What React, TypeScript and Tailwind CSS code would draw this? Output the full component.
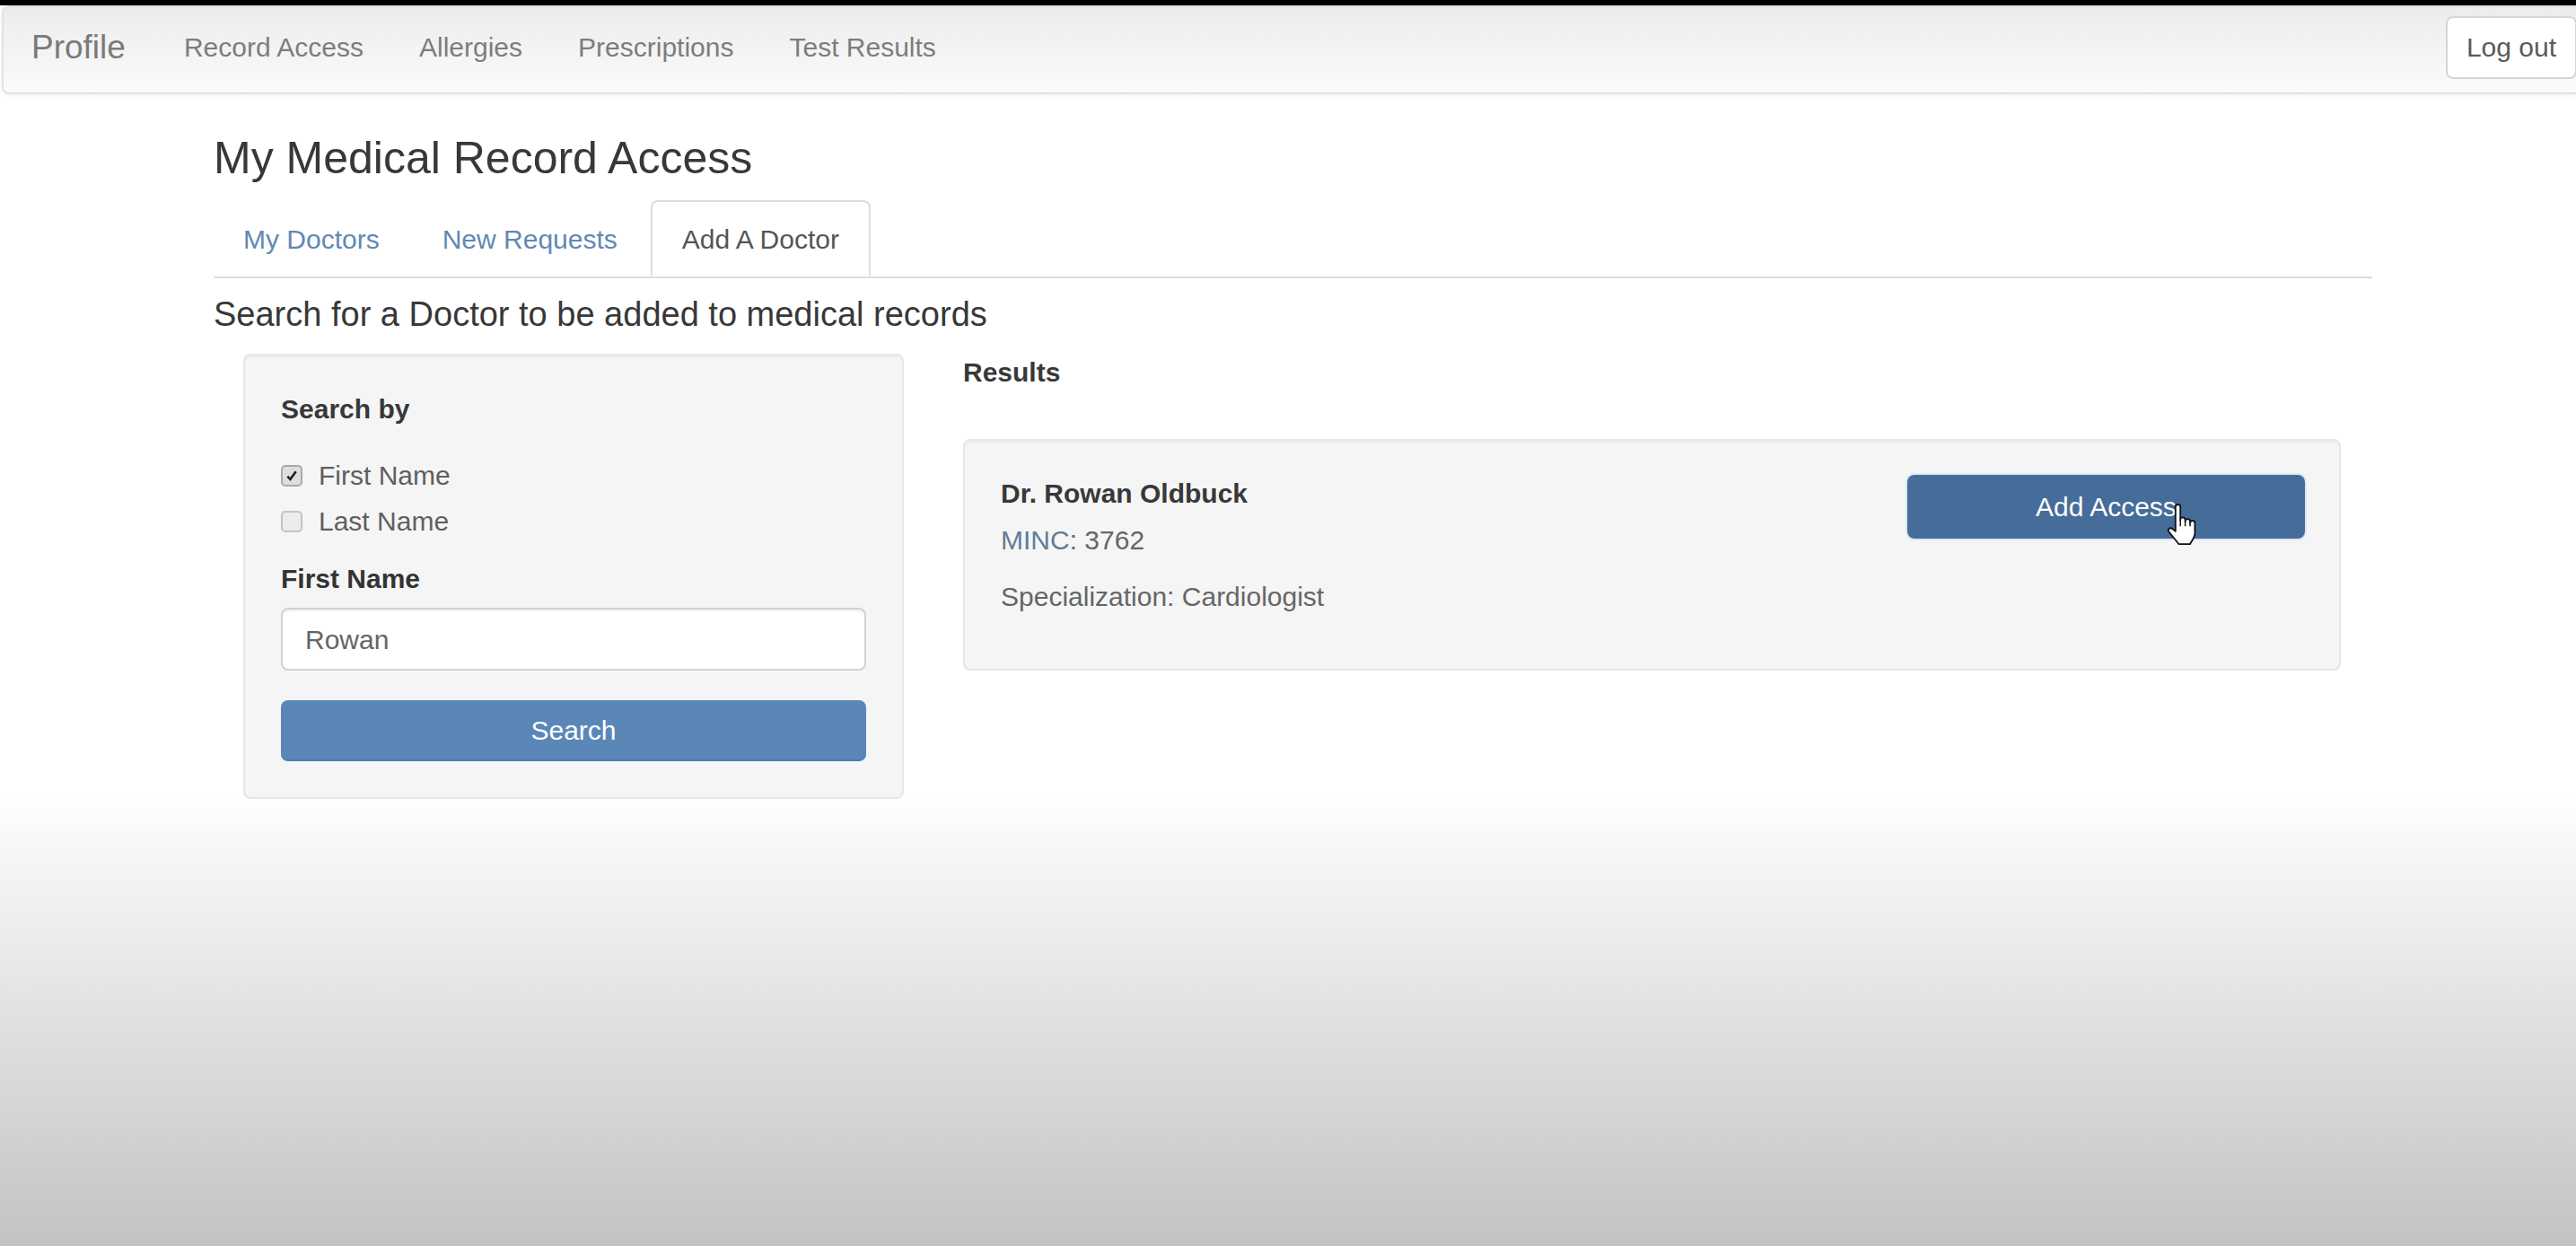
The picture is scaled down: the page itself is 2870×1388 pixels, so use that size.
import React from "react";

const navLinks = ["Record Access", "Allergies", "Prescriptions", "Test Results"];

function HandCursor() {
  return (
    <svg
      viewBox="0 0 20 26"
      className="absolute left-[288px] top-[32px] w-[36px] h-[47px] pointer-events-none"
    >
      <path
        d="M6 2a1.5 1.5 0 0 1 3 0V10a1.5 1.5 0 0 1 3 0V11a1.5 1.5 0 0 1 3 0V12a1.5 1.5 0 0 1 3 0V18c0 3-2 5-3 7H8c-1-1.5-4-5-6-7.5a1.4 1.4 0 0 1 2-2L6 17Z"
        fill="#ffffff"
        stroke="#111111"
        strokeWidth="1"
        strokeLinejoin="round"
      />
      <path d="M9 10v4M12 11v3M15 12v2" stroke="#111111" strokeWidth="0.8" fill="none" />
    </svg>
  );
}

function Navbar() {
  return (
    <div className="h-[99px] ml-[2px] flex items-center pb-[6px] border-2 border-r-0 border-[#e2e2e2] rounded-l-[8px] bg-gradient-to-b from-[#ececec] to-[#fbfbfb] shadow-[0_2px_6px_rgba(0,0,0,0.05)]">
      <span className="pl-[31px] pr-[34px] text-[37px] leading-[41px] text-[#7a7a7a]">Profile</span>
      <nav className="flex">
        {navLinks.map((link) => (
          <a key={link} className="px-[31px] text-[30px] leading-[41px] text-[#7d7d7d]">
            {link}
          </a>
        ))}
      </nav>
      <button className="ml-auto mr-[-1px] h-[70px] px-[21px] border-2 border-[#d6d6d6] rounded-[8px] bg-white text-[30px] text-[#5a5a5a]">
        Log out
      </button>
    </div>
  );
}

function Checkbox({ checked, label }: { checked?: boolean; label: string }) {
  return (
    <div className="h-[41px] flex items-center gap-[18px]">
      <div
        className={
          checked
            ? "w-[24px] h-[24px] rounded-[5px] border-2 border-[#a9a9a9] bg-[#dedede] flex items-center justify-center"
            : "w-[24px] h-[24px] rounded-[5px] border-2 border-[#c4c4c4] bg-[#ececec]"
        }
      >
        {checked && (
          <svg viewBox="0 0 12 12" className="w-[16px] h-[16px]">
            <path d="M2.5 6.5l2.3 2.5L9.5 2.5" stroke="#222" strokeWidth="2" fill="none" />
          </svg>
        )}
      </div>
      <span className="text-[30px] leading-[41px] text-[#5f5f5f]">{label}</span>
    </div>
  );
}

function SearchPanel() {
  return (
    <div className="w-[736px] shrink-0 border-2 border-[#e6e6e6] rounded-[8px] bg-[#f5f5f5] shadow-[inset_0_2px_2px_rgba(0,0,0,0.04)] px-[40px] pt-[39px] pb-[40px]">
      <div className="h-[41px] leading-[41px] text-[30px] font-bold text-[#383838]">Search by</div>
      <div className="mt-[33px]">
        <Checkbox checked label="First Name" />
        <div className="mt-[10px]">
          <Checkbox label="Last Name" />
        </div>
      </div>
      <div className="mt-[23px] h-[41px] leading-[41px] text-[30px] font-bold text-[#333]">First Name</div>
      <div className="mt-[12px] h-[70px] flex items-center px-[25px] bg-white border-2 border-[#d2d2d2] rounded-[8px] shadow-[inset_0_2px_2px_rgba(0,0,0,0.06)] text-[30px] text-[#666]">
        Rowan
      </div>
      <button className="mt-[33px] w-full h-[68px] rounded-[8px] bg-[#5a87b8] border-b-2 border-[#4e7cae] text-[30px] text-white">
        Search
      </button>
    </div>
  );
}

function Results() {
  return (
    <div className="w-[1535px]">
      <div className="h-[41px] leading-[41px] text-[30px] font-bold text-[#383838]">Results</div>
      <div className="mt-[54px] h-[258px] border-2 border-[#e6e6e6] rounded-[8px] bg-[#f5f5f5] shadow-[inset_0_2px_2px_rgba(0,0,0,0.04)] pl-[40px] pr-[38px] pt-[38px] flex justify-between items-start">
        <div>
          <div className="h-[41px] leading-[41px] text-[30px] font-bold text-[#383838]">Dr. Rowan Oldbuck</div>
          <div className="mt-[11px] h-[41px] leading-[41px] text-[30px]">
            <span className="text-[#5f7d98]">MINC</span>
            <span className="text-[#666]">: 3762</span>
          </div>
          <div className="mt-[22px] h-[41px] leading-[41px] text-[30px] text-[#666]">
            Specialization: Cardiologist
          </div>
        </div>
        <button className="relative w-[443px] h-[71px] rounded-[8px] bg-[#466d99] shadow-[0_0_0_2px_#dce7f4] text-[30px] text-white">
          Add Access
          <HandCursor />
        </button>
      </div>
    </div>
  );
}

export default function App() {
  return (
    <div className="relative w-full h-[1388px] overflow-hidden font-['Liberation_Sans',Arial,Helvetica,sans-serif] bg-[linear-gradient(to_bottom,#ffffff_0px,#ffffff_880px,#c3c3c3_1388px)]">
      <div className="h-[6px] bg-black" />
      <Navbar />
      <main className="ml-[238px] w-[2405px]">
        <h3 className="mt-[44px] text-[50px] leading-[54px] text-[#383838]">My Medical Record Access</h3>
        <ul className="mt-[20px] flex gap-[4px] border-b-2 border-[#dddddd]">
          <li>
            <a className="block px-[31px] pt-[21px] pb-[18px] leading-[42px] text-[30px] text-[#6189b2] border-2 border-transparent">
              My Doctors
            </a>
          </li>
          <li>
            <a className="block px-[31px] pt-[21px] pb-[18px] leading-[42px] text-[30px] text-[#6189b2] border-2 border-transparent">
              New Requests
            </a>
          </li>
          <li className="mb-[-2px]">
            <a className="block px-[33px] pt-[21px] pb-[18px] leading-[42px] text-[30px] text-[#555] bg-white border-2 border-[#dddddd] border-b-white rounded-t-[8px]">
              Add A Doctor
            </a>
          </li>
        </ul>
        <h4 className="mt-[20px] text-[38px] leading-[41px] text-[#383838]">
          Search for a Doctor to be added to medical records
        </h4>
        <div className="mt-[23px] ml-[33px] flex gap-[66px] items-start">
          <SearchPanel />
          <Results />
        </div>
      </main>
    </div>
  );
}
